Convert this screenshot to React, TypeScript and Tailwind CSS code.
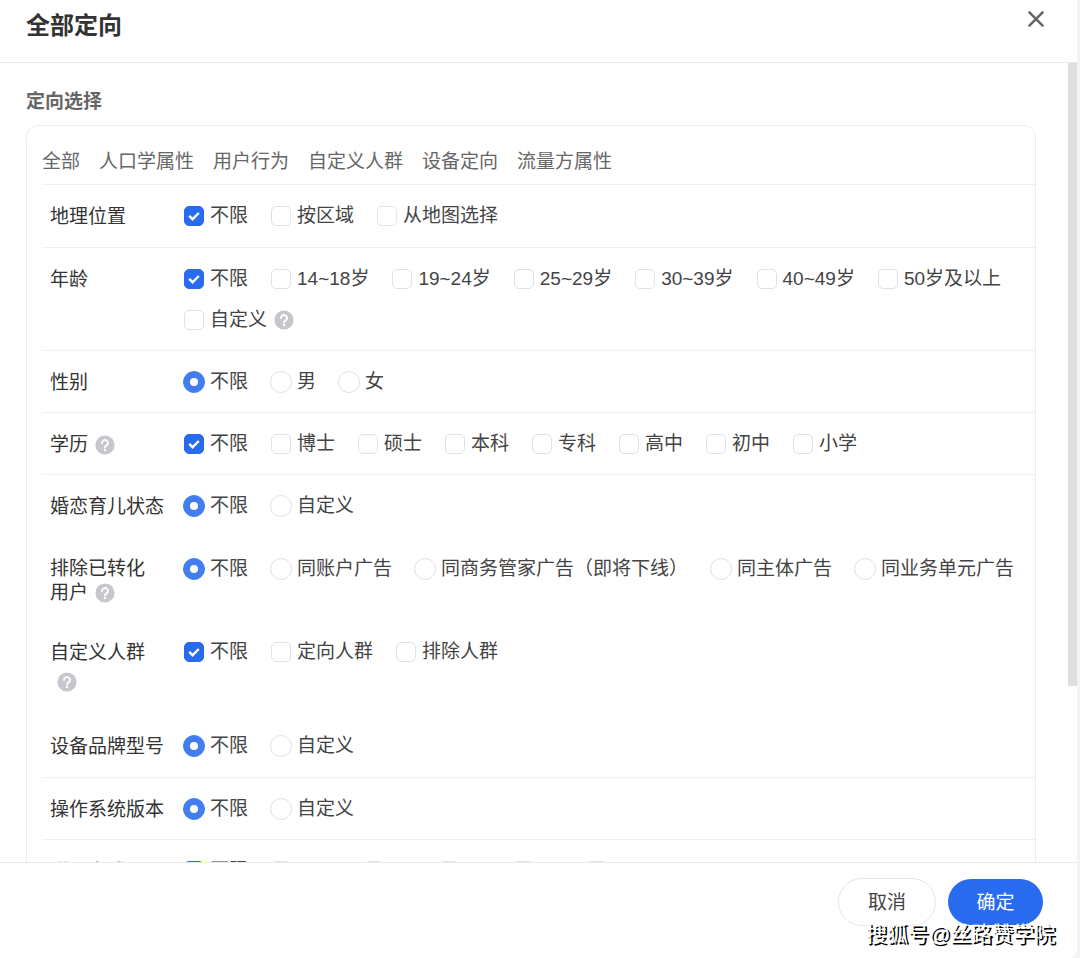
import { useState } from 'react';
import type { ReactNode } from 'react';

type RowData = {
  name: string;
  label: ReactNode;
  kind: 'checkbox' | 'radio';
  options: string[];
  helpOn?: string;
  className: string;
};

const TABS = ['全部', '人口学属性', '用户行为', '自定义人群', '设备定向', '流量方属性'];

function HelpIcon() {
  return (
    <svg viewBox="0 0 20 20" className="inline-block size-5 shrink-0" role="img" aria-label="帮助">
      <circle cx="10" cy="10" r="9.6" fill="#c5c7cc" />
      <path
        d="M7 8a3 2.8 0 1 1 4.7 2.2c-1 .7-1.7 1.1-1.7 2.2"
        fill="none"
        stroke="#fff"
        strokeWidth="1.9"
        strokeLinecap="round"
      />
      <circle cx="10" cy="15" r="1.2" fill="#fff" />
    </svg>
  );
}

const ROWS: RowData[] = [
  { name: 'geo', label: '地理位置', kind: 'checkbox', options: ['不限', '按区域', '从地图选择'], className: 'border-b pb-[11px]' },
  {
    name: 'age',
    label: '年龄',
    kind: 'checkbox',
    options: ['不限', '14~18岁', '19~24岁', '25~29岁', '30~39岁', '40~49岁', '50岁及以上', '自定义'],
    helpOn: '自定义',
    className: 'border-b pb-[10px]',
  },
  { name: 'gender', label: '性别', kind: 'radio', options: ['不限', '男', '女'], className: 'border-b pb-[10px]' },
  {
    name: 'education',
    label: (
      <span className="flex items-center gap-[7px]">
        学历
        <HelpIcon />
      </span>
    ),
    kind: 'checkbox',
    options: ['不限', '博士', '硕士', '本科', '专科', '高中', '初中', '小学'],
    className: 'border-b pb-[10px]',
  },
  { name: 'marital', label: '婚恋育儿状态', kind: 'radio', options: ['不限', '自定义'], className: 'pb-3' },
  {
    name: 'converted',
    label: (
      <span className="flex flex-col leading-6">
        <span>排除已转化</span>
        <span className="flex items-center gap-[7px]">
          用户
          <HelpIcon />
        </span>
      </span>
    ),
    kind: 'radio',
    options: ['不限', '同账户广告', '同商务管家广告（即将下线）', '同主体广告', '同业务单元广告'],
    className: 'pb-4',
  },
  {
    name: 'crowd',
    label: (
      <span className="flex flex-col gap-1">
        <span>自定义人群</span>
        <span className="flex h-[25px] items-center pl-[7px]">
          <HelpIcon />
        </span>
      </span>
    ),
    kind: 'checkbox',
    options: ['不限', '定向人群', '排除人群'],
    className: 'pb-[21px]',
  },
  { name: 'device', label: '设备品牌型号', kind: 'radio', options: ['不限', '自定义'], className: 'border-b pb-[11px]' },
  { name: 'os', label: '操作系统版本', kind: 'radio', options: ['不限', '自定义'], className: 'border-b pb-[10px]' },
  { name: 'network', label: '联网方式', kind: 'checkbox', options: ['不限', 'Wi-Fi', '5G', '4G', '3G', '2G'], className: 'border-b pb-[10px]' },
];

function CheckboxMark() {
  return (
    <span className="mx-px flex size-5 items-center justify-center rounded-[5px] border border-[#e0e0e8] bg-white peer-checked:border-[#296bef] peer-checked:bg-[#296bef] peer-focus-visible:ring-2">
      <svg viewBox="0 0 20 20" className="size-5 shrink-0">
        <path d="M5.2 9.8l3.4 3.4 6.2-6.2" fill="none" stroke="#fff" strokeWidth="2.4" />
      </svg>
    </span>
  );
}

function RadioMark() {
  return (
    <span className="flex size-[22px] items-center justify-center rounded-full border border-[#e0e0e8] bg-white peer-checked:border-[#437ef0] peer-checked:bg-[#437ef0] peer-focus-visible:ring-2">
      <span className="size-2 rounded-full bg-white" />
    </span>
  );
}

function TargetingRow({ row }: { row: RowData }) {
  const [selected, setSelected] = useState<string[]>(['不限']);

  const toggle = (option: string) => {
    if (row.kind === 'radio' || option === '不限') {
      setSelected([option]);
      return;
    }
    const rest = selected.filter((item) => item !== '不限' && item !== option);
    const next = selected.includes(option) ? rest : [...rest, option];
    setSelected(next.length ? next : ['不限']);
  };

  return (
    <div
      role={row.kind === 'radio' ? 'radiogroup' : 'group'}
      aria-labelledby={`${row.name}-label`}
      className={`flex items-start border-[#f0f0f2] pt-[10px] ${row.className}`}
    >
      <div id={`${row.name}-label`} className="w-[141px] shrink-0 pt-[9px] pl-2 leading-[25px] text-[#333]">
        {row.label}
      </div>
      <div className="flex min-w-0 flex-1 flex-wrap gap-x-[22px]">
        {row.options.map((option) => (
          <div key={option} className="flex h-[41px] items-center gap-[7px]">
            <label className="relative flex cursor-pointer items-center gap-[5px] whitespace-nowrap">
              <input
                type={row.kind}
                name={row.name}
                checked={selected.includes(option)}
                onChange={() => toggle(option)}
                className="peer absolute size-5 opacity-0"
              />
              {row.kind === 'radio' ? <RadioMark /> : <CheckboxMark />}
              <span className="pt-[2px]">{option}</span>
            </label>
            {row.helpOn === option && <HelpIcon />}
          </div>
        ))}
      </div>
    </div>
  );
}

export default function App() {
  return (
    <div className="h-screen bg-[#f3f3f4] pr-[3px] font-['Liberation_Sans','Noto_Sans_CJK_SC',sans-serif] text-[19px] text-[#444]">
      <div role="dialog" aria-labelledby="title" className="relative flex h-full flex-col overflow-hidden rounded-br-lg bg-white">
        <header className="flex h-[63px] shrink-0 items-start justify-between border-b border-[#ebebed] pr-8 pl-[26px]">
          <h1 id="title" className="pt-2 text-2xl leading-9 font-bold text-[#333]">全部定向</h1>
          <button type="button" aria-label="关闭" className="mt-[10px] flex size-[18px] items-center justify-center">
            <svg viewBox="0 0 18 18" className="size-[18px]">
              <path d="M2.4 2.4l13.2 13.2M15.6 2.4L2.4 15.6" stroke="#666" strokeWidth="2.5" strokeLinecap="round" />
            </svg>
          </button>
        </header>

        <div className="flex min-h-0 flex-1">
          <main className="min-w-0 flex-1 overflow-hidden pr-8 pl-[26px]">
            <h2 className="pt-[25px] pb-[9px] leading-7 font-bold text-[#666]">定向选择</h2>
            <section className="rounded-xl border border-[#ededf0] pl-[15px]">
              <nav className="flex h-[59px] items-center gap-[19px] border-b border-[#f0f0f2] pt-[14px] text-[#666]">
                {TABS.map((tab) => (
                  <button key={tab} type="button" className="cursor-pointer whitespace-nowrap">
                    {tab}
                  </button>
                ))}
              </nav>
              {ROWS.map((row) => (
                <TargetingRow key={row.name} row={row} />
              ))}
            </section>
          </main>
          <div className="w-[9px] shrink-0">
            <div className="h-[78%] bg-[#dfdfdf]" />
          </div>
        </div>

        <footer className="flex h-24 shrink-0 items-start justify-end gap-3 border-t border-[#ebebee] pt-[15px] pr-[34px]">
          <button type="button" className="h-12 w-[98px] rounded-full border border-[#e6e6ec] bg-white pt-[3px]">
            取消
          </button>
          <button type="button" className="mt-px h-[46px] w-[95px] rounded-full bg-[#296bef] pt-[3px] text-white">
            确定
          </button>
        </footer>

        <p className="pointer-events-none absolute right-[22px] bottom-[10px] text-[21px] leading-7 whitespace-nowrap text-white [text-shadow:2px_2px_0_#000]">
          搜狐号@丝路赞学院
        </p>
      </div>
    </div>
  );
}
